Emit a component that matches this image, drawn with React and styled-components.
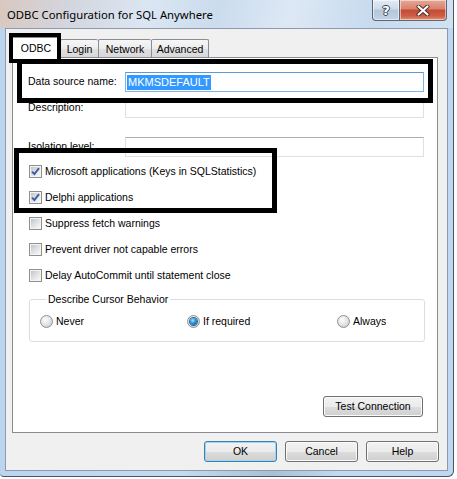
import React from 'react'
import styled, { createGlobalStyle } from 'styled-components'

const GlobalStyle = createGlobalStyle`
  html, body {
    margin: 0;
    padding: 0;
    background: #ffffff;
  }
  body {
    font-family: 'Liberation Sans', Arial, sans-serif;
    font-size: 10.5px;
    color: #000;
  }
`

const Window = styled.div`
  position: relative;
  box-sizing: border-box;
  width: 454px;
  height: 477px;
  display: flex;
  flex-direction: column;
  border-right: 1px solid #4a545f;
  border-bottom: 1px solid #4a545f;
  border-bottom-right-radius: 6px;
  border-bottom-left-radius: 4px;
  background: linear-gradient(90deg, #bcd5ef 0%, #c4daf1 40%, #a9bfd6 60%, #c2d9f1 75%, #bfd7f0 100%);
  overflow: hidden;
`

const TitleBar = styled.div`
  height: 28px;
  display: flex;
  align-items: flex-start;
  background: linear-gradient(100deg, #d9c8bf 0%, #d3d6df 16%, #dbe6f2 32%, #cbdcee 48%, #dde8f4 64%, #c7daee 82%, #d2e2f2 100%);
`

const Title = styled.div`
  flex: 1;
  padding: 7px 0 0 7px;
  font-family: 'Noto Sans', 'Open Sans', sans-serif;
  font-size: 11.3px;
  line-height: 16px;
  color: #000;
`

const CaptionButtons = styled.div`
  display: flex;
  margin-right: 6px;
`

const CaptionButton = styled.div`
  box-sizing: border-box;
  width: ${p => p.$width}px;
  height: 21px;
  display: flex;
  align-items: center;
  justify-content: center;
  border: 1px solid #5b6676;
  border-top: none;
  border-radius: ${p => (p.$first ? '0 0 0 4px' : '0 0 4px 0')};
  border-left: ${p => (p.$first ? '1px solid #5b6676' : 'none')};
  background: ${p =>
    p.$close
      ? 'linear-gradient(#e6a796 0%, #d8826c 45%, #c34a33 50%, #cf5e45 80%, #e0916e 100%)'
      : 'linear-gradient(#e3ebf4 0%, #cfdbe8 45%, #b5c6da 50%, #c3d3e4 100%)'};
  box-shadow: inset 0 0 0 1px rgba(255, 255, 255, 0.5);
`

const HelpGlyph = styled.span`
  font: bold 13px 'DejaVu Sans', sans-serif;
  color: #ffffff;
  text-shadow: 0 0 1px #3b4655, 1px 0 0 #3b4655, -1px 0 0 #3b4655, 0 1px 0 #3b4655, 0 -1px 0 #3b4655;
  line-height: 13px;
`

const Client = styled.div`
  box-sizing: border-box;
  width: 443px;
  height: 443px;
  margin: 0 0 0 5px;
  display: flex;
  flex-direction: column;
  padding: 8px 8px 0 6px;
  background: #f0f0f0;
  border: 1px solid #8c9bac;
`

const TabRow = styled.div`
  display: flex;
  align-items: flex-start;
  height: 20px;
`

const Tab = styled.div`
  box-sizing: border-box;
  width: ${p => p.$width}px;
  height: ${p => (p.$active ? 21 : 18)}px;
  margin-top: ${p => (p.$active ? 0 : 2)}px;
  position: relative;
  z-index: ${p => (p.$active ? 2 : 0)};
  display: flex;
  align-items: center;
  justify-content: center;
  border: 1px solid #898c95;
  border-bottom: none;
  border-right: ${p => (p.$last || p.$active ? '1px solid #898c95' : 'none')};
  border-radius: 2px 2px 0 0;
  background: ${p =>
    p.$active ? '#ffffff' : 'linear-gradient(#f6f6f6 0%, #ececec 50%, #e0e0e0 51%, #d9d9d9 100%)'};
  padding-top: ${p => (p.$active ? 0 : 1)}px;
  line-height: 13px;
`

const Panel = styled.div`
  box-sizing: border-box;
  width: 426px;
  height: 376px;
  display: flex;
  flex-direction: column;
  padding: 14px 12px 15px 15px;
  background: #ffffff;
  border: 1px solid #898c95;
`

const FieldRow = styled.div`
  display: grid;
  grid-template-columns: 97px 299px;
  align-items: center;
  margin-top: ${p => p.$gap || 0}px;
  height: 20px;
`

const Label = styled.div`
  line-height: 13px;
  padding-bottom: 1px;
`

const TextBox = styled.div`
  box-sizing: border-box;
  height: 20px;
  display: flex;
  align-items: center;
  padding-left: 1px;
  border: 1px solid ${p => (p.$focused ? '#7eb4ea' : '#dde1e7')};
  border-top-color: ${p => (p.$focused ? '#5d9bd8' : '#abadb3')};
  background: #ffffff;
`

const Selected = styled.span`
  background: #3399ff;
  color: #ffffff;
  font-size: 11px;
  line-height: 15px;
  padding: 0 1px 0 1px;
`

const CheckList = styled.div`
  display: flex;
  flex-direction: column;
  margin-top: 1px;
`

const CheckRow = styled.div`
  height: 26px;
  display: flex;
  align-items: center;
  gap: 3px;
  margin-left: 1px;
  line-height: 13px;
`

const Box = styled.span`
  box-sizing: border-box;
  width: 13px;
  height: 13px;
  flex: none;
  display: flex;
  align-items: center;
  justify-content: center;
  border: 1px solid #8e8f8f;
  background: linear-gradient(135deg, #b8bcc2 0%, #dcdee1 45%, #f4f4f5 85%, #fbfbfb 100%);
  box-shadow: inset 0 0 0 1px #f4f4f4;
`

const Group = styled.fieldset`
  box-sizing: border-box;
  width: 396px;
  margin: 5px 0 0 1px;
  padding: 8px 0 12px 10px;
  border: 1px solid #d5dfe5;
  border-radius: 3px;
`

const Legend = styled.legend`
  margin-left: 6px;
  padding: 0 2px;
  line-height: 13px;
`

const RadioGrid = styled.div`
  display: grid;
  grid-template-columns: 147px 150px auto;
  height: 15px;
  align-items: center;
`

const RadioItem = styled.div`
  display: flex;
  align-items: center;
  gap: 3px;
  line-height: 13px;
`

const RadioCircle = styled.span`
  box-sizing: border-box;
  width: 13px;
  height: 13px;
  flex: none;
  border-radius: 50%;
  border: 1px solid #8f9193;
  display: flex;
  align-items: center;
  justify-content: center;
  background: radial-gradient(circle at 40% 35%, #fdfdfd 0%, #e6e6e6 45%, #c3c4c6 100%);
`

const RadioDot = styled.span`
  width: 7px;
  height: 7px;
  border-radius: 50%;
  background: radial-gradient(circle at 40% 35%, #a6e3ff 0%, #2d8fd8 45%, #0b4b8f 100%);
  box-shadow: 0 0 0 1px #2a6599;
`

const PanelFooter = styled.div`
  margin-top: auto;
  display: flex;
  justify-content: flex-end;
  padding-right: 2px;
`

const ButtonRow = styled.div`
  display: flex;
  justify-content: flex-end;
  gap: 8px;
  margin-top: 8px;
`

const Button = styled.button`
  box-sizing: border-box;
  width: ${p => p.$width}px;
  height: 21px;
  padding: 0 0 1px;
  border: 1px solid ${p => (p.$default ? '#3c7fb1' : '#707070')};
  border-radius: 3px;
  background: linear-gradient(#f2f2f2 0%, #ebebeb 50%, #dddddd 51%, #cfcfcf 100%);
  box-shadow: inset 0 0 0 1px ${p => (p.$default ? '#9fd4f4' : '#fbfbfb')};
  font-family: 'Liberation Sans', Arial, sans-serif;
  font-size: 10.5px;
  color: #000;
`

const Highlight = styled.div`
  position: absolute;
  box-sizing: border-box;
  left: ${p => p.$x}px;
  top: ${p => p.$y}px;
  width: ${p => p.$w}px;
  height: ${p => p.$h}px;
  border: ${p => p.$t}px solid #000;
  pointer-events: none;
  z-index: 5;
`

const Check = ({ checked }) => (
  <Box>
    {checked && (
      <svg width="9" height="9" viewBox="0 0 9 9">
        <path d="M1 4.6 L3.4 7 L8 1.2" fill="none" stroke="#3d5c9f" strokeWidth="1.9" />
      </svg>
    )}
  </Box>
)

const Radio = ({ checked, label }) => (
  <RadioItem>
    <RadioCircle>{checked && <RadioDot />}</RadioCircle>
    {label}
  </RadioItem>
)

const CloseGlyph = () => (
  <svg width="14" height="11" viewBox="0 0 14 11">
    <path d="M2.5 1.5 L11.5 9.5 M11.5 1.5 L2.5 9.5" stroke="#4a2a24" strokeWidth="4" strokeLinecap="round" />
    <path d="M2.5 1.5 L11.5 9.5 M11.5 1.5 L2.5 9.5" stroke="#ffffff" strokeWidth="2.2" strokeLinecap="round" />
  </svg>
)

const options = [
  { label: 'Microsoft applications (Keys in SQLStatistics)', checked: true },
  { label: 'Delphi applications', checked: true },
  { label: 'Suppress fetch warnings', checked: false },
  { label: 'Prevent driver not capable errors', checked: false },
  { label: 'Delay AutoCommit until statement close', checked: false }
]

const tabs = [
  { name: 'ODBC', width: 48 },
  { name: 'Login', width: 38 },
  { name: 'Network', width: 53 },
  { name: 'Advanced', width: 58 }
]

const App = () => {
  return (
    <>
      <GlobalStyle />
      <Window>
        <TitleBar>
          <Title>ODBC Configuration for SQL Anywhere</Title>
          <CaptionButtons>
            <CaptionButton $width={28} $first>
              <HelpGlyph>?</HelpGlyph>
            </CaptionButton>
            <CaptionButton $width={47} $close>
              <CloseGlyph />
            </CaptionButton>
          </CaptionButtons>
        </TitleBar>
        <Client>
          <TabRow>
            {tabs.map((t, i) => (
              <Tab key={t.name} $width={t.width} $active={i === 0} $last={i === tabs.length - 1}>
                {t.name}
              </Tab>
            ))}
          </TabRow>
          <Panel>
            <FieldRow>
              <Label>Data source name:</Label>
              <TextBox $focused>
                <Selected>MKMSDEFAULT</Selected>
              </TextBox>
            </FieldRow>
            <FieldRow $gap={6}>
              <Label>Description:</Label>
              <TextBox />
            </FieldRow>
            <FieldRow $gap={19}>
              <Label>Isolation level:</Label>
              <TextBox />
            </FieldRow>
            <CheckList>
              {options.map(o => (
                <CheckRow key={o.label}>
                  <Check checked={o.checked} />
                  {o.label}
                </CheckRow>
              ))}
            </CheckList>
            <Group>
              <Legend>Describe Cursor Behavior</Legend>
              <RadioGrid>
                <Radio label="Never" />
                <Radio label="If required" checked />
                <Radio label="Always" />
              </RadioGrid>
            </Group>
            <PanelFooter>
              <Button $width={100}>Test Connection</Button>
            </PanelFooter>
          </Panel>
          <ButtonRow>
            <Button $width={73} $default>OK</Button>
            <Button $width={73}>Cancel</Button>
            <Button $width={73}>Help</Button>
          </ButtonRow>
        </Client>
        <Highlight $x={9} $y={33} $w={52} $h={30} $t={4} />
        <Highlight $x={17} $y={59} $w={416} $h={44} $t={5} />
        <Highlight $x={14} $y={148} $w={263} $h={65} $t={5} />
      </Window>
    </>
  )
}

export default App
